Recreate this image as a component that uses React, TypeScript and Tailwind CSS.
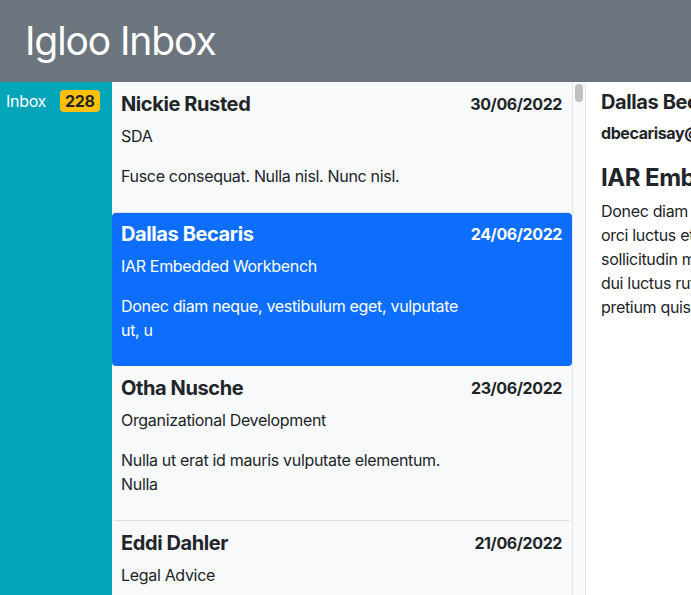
import React from "react";

type Mail = { name: string; date: string; subject: string; body: string; selected?: boolean };

const mails: Mail[] = [
  { name: "Nickie Rusted", date: "30/06/2022", subject: "SDA", body: "Fusce consequat. Nulla nisl. Nunc nisl." },
  {
    name: "Dallas Becaris",
    date: "24/06/2022",
    subject: "IAR Embedded Workbench",
    body: "Donec diam neque, vestibulum eget, vulputate ut, u",
    selected: true,
  },
  {
    name: "Otha Nusche",
    date: "23/06/2022",
    subject: "Organizational Development",
    body: "Nulla ut erat id mauris vulputate elementum. Nulla",
  },
  { name: "Eddi Dahler", date: "21/06/2022", subject: "Legal Advice", body: "Quisque porta volutpat erat. Quisque erat eros." },
];

const bodyLines = [
  "Donec diam neque, vestibulum eget, vulputate ut, ultrices vel, augue. Vestibulum ante ipsum primis in faucibus",
  "orci luctus et ultrices posuere cubilia Curae; Donec pharetra, magna vestibulum aliquet ultrices, erat tortor",
  "sollicitudin mi, sit amet lobortis sapien sapien non mi. Integer ac neque. Duis bibendum. Morbi non quam nec",
  "dui luctus rutrum. Nulla tellus. In sagittis dui vel nisl. Duis ac nibh. Fusce lacus purus, aliquet at, feugiat non,",
  "pretium quis, lectus.",
];

export default function App() {
  return (
    <div
      className="w-[691px] h-[595px] overflow-hidden flex flex-col text-[#212529]"
      style={{ fontFamily: "Inter, 'Noto Sans', sans-serif" }}
    >
      <header className="h-[82px] shrink-0 bg-[#6c757d] flex items-center pl-[25px]">
        <h1 className="text-[39px] leading-none text-white font-normal tracking-[-1.1px] pb-[1px]">Igloo Inbox</h1>
      </header>
      <div className="flex flex-1 min-h-0">
        <aside className="w-[112px] shrink-0 bg-[#03a5b9] pt-[8px]">
          <div className="flex items-center pl-[6px]">
            <span className="text-white text-[16px] leading-[22px] tracking-[-0.3px]">Inbox</span>
            <span className="ml-[14px] bg-[#ffc107] text-[#212529] font-bold text-[16px] leading-[22px] px-[5px] rounded-[4px] tracking-[-0.3px]">
              228
            </span>
          </div>
        </aside>
        <section className="w-[474px] shrink-0 flex bg-[#f8f9fa]">
          <div className="w-[460px] shrink-0 overflow-hidden">
            {mails.map((m, i) => (
              <div
                key={i}
                className={
                  m.selected
                    ? "bg-[#0d6efd] text-white rounded-[4px]"
                    : "text-[#212529] px-[2px]"
                }
              >
                <div
                  className={
                    m.selected
                      ? "pl-[9px] pr-[10px] pt-[9px] pb-[24px]"
                      : "pl-[7px] pr-[8px] pt-[10px] pb-[24px] border-b border-[#dee2e6]"
                  }
                >
                  <div className="flex justify-between items-center h-[24px]">
                    <span className="font-bold text-[20px] leading-[24px] tracking-[-0.4px]">{m.name}</span>
                    <span className="font-bold text-[16px] leading-[24px] tracking-[-0.4px]">{m.date}</span>
                  </div>
                  <div className="mt-[8px] text-[16px] leading-[24px] tracking-[-0.32px]">{m.subject}</div>
                  <div className="mt-[16px] text-[16px] leading-[24px] tracking-[-0.32px] w-[346px]">{m.body}</div>
                </div>
              </div>
            ))}
          </div>
          <div className="w-[14px] shrink-0 border-l border-r border-[#e8e8e8] bg-[#fafafa] pt-[2px] flex justify-center">
            <div className="w-[8px] h-[18px] rounded-full bg-[#c1c1c1]" />
          </div>
        </section>
        <main className="w-[900px] shrink-0 bg-white pl-[15px] pt-[8px]">
          <div className="font-bold text-[20px] leading-[24px] tracking-[-0.4px] whitespace-nowrap">Dallas Becaris</div>
          <div className="mt-[7px] font-bold text-[16px] leading-[24px] tracking-[-0.4px] whitespace-nowrap">
            dbecarisay@ihg.com
          </div>
          <div className="mt-[15px] font-bold text-[24px] leading-[36px] tracking-[-0.5px] whitespace-nowrap">
            IAR Embedded Workbench
          </div>
          <div className="mt-[3px] text-[16px] leading-[24px] tracking-[-0.32px]">
            {bodyLines.map((l, i) => (
              <div key={i} className="whitespace-nowrap">
                {l}
              </div>
            ))}
          </div>
        </main>
      </div>
    </div>
  );
}
